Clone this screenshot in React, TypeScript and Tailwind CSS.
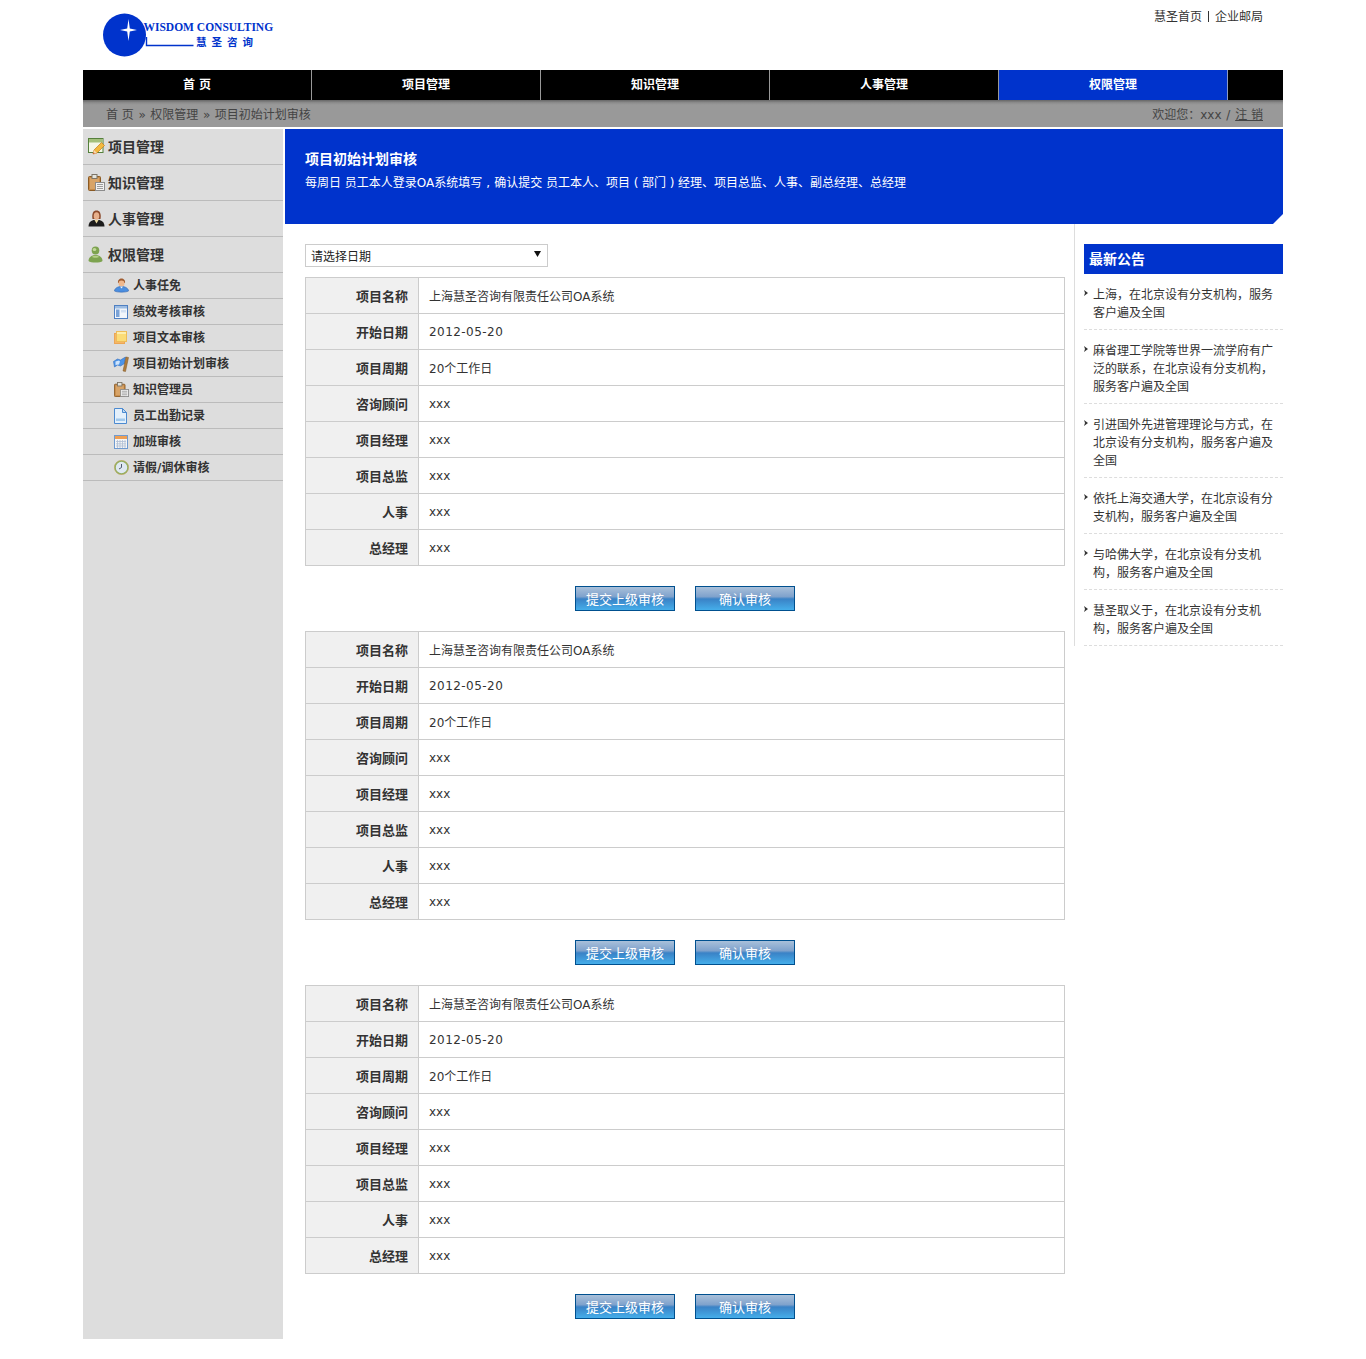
import React from "react"

const navItems = ["首 页", "项目管理", "知识管理", "人事管理", "权限管理"]

const fields = [
  ["项目名称", "上海慧圣咨询有限责任公司OA系统"],
  ["开始日期", "2012-05-20"],
  ["项目周期", "20个工作日"],
  ["咨询顾问", "xxx"],
  ["项目经理", "xxx"],
  ["项目总监", "xxx"],
  ["人事", "xxx"],
  ["总经理", "xxx"],
]

const notices = [
  "上海，在北京设有分支机构，服务客户遍及全国",
  "麻省理工学院等世界一流学府有广泛的联系，在北京设有分支机构，服务客户遍及全国",
  "引进国外先进管理理论与方式，在北京设有分支机构，服务客户遍及全国",
  "依托上海交通大学，在北京设有分支机构，服务客户遍及全国",
  "与哈佛大学，在北京设有分支机构，服务客户遍及全国",
  "慧圣取义于，在北京设有分支机构，服务客户遍及全国",
]

// Small menu icons, drawn by hand
function EditIcon() {
  return (
    <svg width="17" height="17" viewBox="0 0 17 17">
      <rect x="0.500" y="0.500" width="14.500" height="14" fill="#f4f7e8" stroke="#55803c" />
      <rect x="1" y="1" width="13.500" height="3.500" fill="#a3c07c" />
      <path d="M5 16l1-4 7.500-7.500 3 3L9 15z" fill="#f3b93e" stroke="#c07a20" strokeWidth="0.7" />
      <path d="M5 16l1-4 3 3z" fill="#f6d6b0" />
      <path d="M5 16l.500-1.800 1.300 1.300z" fill="#c84a20" />
    </svg>
  )
}

function ClipboardIcon({ size = 17 }: { size?: number }) {
  return (
    <svg width={size} height={size} viewBox="0 0 17 17">
      <rect x="0.500" y="2.500" width="12" height="14" rx="1" fill="#c68a48" stroke="#8a5a24" />
      <rect x="2" y="4" width="9" height="11" fill="#d8a468" />
      <rect x="4" y="0.500" width="5" height="4" fill="#e4e4dc" stroke="#7d7466" />
      <rect x="7.500" y="8.500" width="9" height="8" fill="#f2f2f2" stroke="#8c8c8c" />
      <path d="M9 10.500h6M9 12.500h6M9 14.500h6" stroke="#9c9c9c" />
    </svg>
  )
}

function ManagerIcon() {
  return (
    <svg width="17" height="17" viewBox="0 0 17 17">
      <path d="M4.500 9C3.500 3 5.500.500 8.500.500S13.500 3 12.500 9z" fill="#8c4a2c" />
      <ellipse cx="8.500" cy="6" rx="2.800" ry="3.800" fill="#e8b08c" />
      <path d="M.500 16.500c0-3.500 1.500-5.500 5-6.500h6c3.500 1 5 3 5 6.500z" fill="#1c1c1c" />
      <path d="M6.500 10h4l-2 3.500z" fill="#e8d8a0" />
    </svg>
  )
}

function GreenUserIcon() {
  return (
    <svg width="16" height="17" viewBox="0 0 16 17">
      <ellipse cx="7.500" cy="4.500" rx="3.800" ry="4" fill="#7da34f" />
      <path d="M.500 15c0-3.500 3-6 7-6s7 2.500 7 6c-2 2-12 2-14 0z" fill="#7da34f" />
      <path d="M4 11c1-1 2-1.200 3.500-1.200s2.500.2 3.500 1.200c-1 1-6 1-7 0z" fill="#b5d088" />
      <ellipse cx="6.500" cy="3.500" rx="1.800" ry="1.500" fill="#c2d89c" />
    </svg>
  )
}

function BlueUserIcon() {
  return (
    <svg width="15" height="15" viewBox="0 0 15 15">
      <path d="M4 5c-.5-3 1.500-4.500 3.500-4.500S11.500 2 11 5z" fill="#a05c30" />
      <ellipse cx="7.500" cy="5.500" rx="3" ry="3" fill="#eeb88e" />
      <path d="M.500 13c0-2.500 3-4.500 7-4.500s7 2 7 4.500c-2 1.500-12 1.500-14 0z" fill="#4a8ee0" stroke="#3568b0" strokeWidth="0.6" />
      <path d="M6 8.500h3l-1.500 2z" fill="#f4f4f4" />
    </svg>
  )
}

function WindowIcon() {
  return (
    <svg width="14" height="14" viewBox="0 0 14 14">
      <rect x="0.500" y="0.500" width="13" height="13" fill="#f2f6fb" stroke="#4f80c2" />
      <rect x="1" y="1" width="12" height="2.500" fill="#9cbce2" />
      <rect x="2" y="4.500" width="3.500" height="7.500" fill="#7aa2d6" />
      <rect x="7" y="5" width="5" height="2.500" fill="#d2e0f2" />
    </svg>
  )
}

function NoteIcon() {
  return (
    <svg width="13" height="13" viewBox="0 0 13 13">
      <rect x="0.500" y="2.500" width="10" height="10" fill="#f6b668" stroke="#eba654" />
      <rect x="2.500" y="0.500" width="10" height="10" fill="#fbdc78" stroke="#eebc58" />
      <rect x="3" y="1" width="9" height="2" fill="#fdeeb0" />
    </svg>
  )
}

function FlagIcon() {
  return (
    <svg width="16" height="16" viewBox="0 0 16 16" className="-ml-[1px]">
      <path d="M.500 5.500L4.500 3l3 1 5-3-1 6.500-4 2.500-3-1-3 2z" fill="#4c94e8" stroke="#2f6cc0" strokeWidth="0.6" />
      <path d="M2.500 5.500L6 4.500l1 1-1 3-3.500 .5z" fill="#cfe4fb" />
      <path d="M13 1l2.500 .5-3 14-2.500-.5z" fill="#b07c3c" stroke="#7d5624" strokeWidth="0.5" />
    </svg>
  )
}

function DocIcon() {
  return (
    <svg width="13" height="16" viewBox="0 0 13 16">
      <path d="M.500.500h8l4 4v11H.500z" fill="#e4f0fb" stroke="#4c8ad0" />
      <path d="M8.500.500v4h4z" fill="#c0daf2" stroke="#4c8ad0" />
      <rect x="2" y="10.500" width="9" height="2.500" fill="#a0c8ec" />
    </svg>
  )
}

function CalendarIcon() {
  return (
    <svg width="14" height="14" viewBox="0 0 14 14">
      <rect x="0.500" y="0.500" width="13" height="13" fill="#f6f6f6" stroke="#6f9ad0" />
      <rect x="1" y="1" width="12" height="3" fill="#ee9f54" />
      <path d="M3.500 5v8M6 5v8M8.500 5v8M11 5v8M2 6.500h10M2 8.800h10M2 11h10" stroke="#aebed4" strokeWidth="0.8" />
    </svg>
  )
}

function ClockIcon() {
  return (
    <svg width="15" height="15" viewBox="0 0 15 15">
      <circle cx="7.500" cy="7.500" r="6.500" fill="#dfe8f2" stroke="#8cb060" strokeWidth="1.600" />
      <circle cx="7.500" cy="7.500" r="7" fill="none" stroke="#d8a060" strokeWidth="0.500" />
      <path d="M7.500 4v3.500l-2.500 1.500" fill="none" stroke="#505c70" />
    </svg>
  )
}

const mainMenu = [
  { label: "项目管理", icon: <EditIcon /> },
  { label: "知识管理", icon: <ClipboardIcon /> },
  { label: "人事管理", icon: <ManagerIcon /> },
  { label: "权限管理", icon: <GreenUserIcon /> },
]

const subMenu = [
  { label: "人事任免", icon: <BlueUserIcon /> },
  { label: "绩效考核审核", icon: <WindowIcon /> },
  { label: "项目文本审核", icon: <NoteIcon /> },
  { label: "项目初始计划审核", icon: <FlagIcon /> },
  { label: "知识管理员", icon: <ClipboardIcon size={15} /> },
  { label: "员工出勤记录", icon: <DocIcon /> },
  { label: "加班审核", icon: <CalendarIcon /> },
  { label: "请假/调休审核", icon: <ClockIcon /> },
]

function Logo() {
  return (
    <svg width="180" height="50" viewBox="0 0 180 50" className="mt-[10px]">
      <circle cx="21.500" cy="25" r="21.500" fill="#0033cc" />
      <path d="M25.500 9l1.300 9.500 7.200 1.500-7.200 1.500-1.300 9.500-1.300-9.500-7.200-1.500 7.200-1.500z" fill="#fff" />
      <text x="40.500" y="20.500" fontFamily="Liberation Serif, serif" fontWeight="700" fontSize="11.500" fill="#0033cc">
        WISDOM CONSULTING
      </text>
      <path d="M43.500 27v8.500h47" fill="none" stroke="#0033cc" strokeWidth="1.400" />
      <text x="93" y="36" fontFamily="Noto Sans CJK SC, serif" fontWeight="700" fontSize="10.500" letterSpacing="5" fill="#0033cc">
        慧圣咨询
      </text>
    </svg>
  )
}

function ProjectBlock() {
  return (
    <div className="w-[760px]">
      <table className="w-full border-collapse text-[#333]">
        <tbody>
          {fields.map(([label, value]) => (
            <tr key={label}>
              <td className="h-9 w-[113px] border border-[#ccc] bg-[#f0f0f0] pr-[10px] pt-[2px] text-right text-[13px] font-bold">
                {label}
              </td>
              <td
                className={
                  value === "2012-05-20"
                    ? "border border-[#ccc] pl-[10px] tracking-[0.45px]"
                    : value === "xxx"
                      ? "border border-[#ccc] pl-[10px]"
                      : "border border-[#ccc] pl-[10px] pt-[2px]"
                }
              >
                {value}
              </td>
            </tr>
          ))}
        </tbody>
      </table>
      <div className="flex justify-center gap-5 py-5">
        <button className="h-[25px] w-[100px] border border-[#00508f] bg-[linear-gradient(#a9c0da_0%,#7fa2cc_42%,#3a82c6_52%,#45aeea_100%)] pt-[2px] text-[13px] text-white">
          提交上级审核
        </button>
        <button className="h-[25px] w-[100px] border border-[#00508f] bg-[linear-gradient(#a9c0da_0%,#7fa2cc_42%,#3a82c6_52%,#45aeea_100%)] pt-[2px] text-[13px] text-white">
          确认审核
        </button>
      </div>
    </div>
  )
}

export default function App() {
  return (
    <div className="mx-auto w-[1200px] pb-5 font-['DejaVu_Sans','Noto_Sans_CJK_SC',sans-serif] text-xs text-[#333]">
      {/* Header */}
      <div className="flex h-[70px] justify-between pl-5 pr-5">
        <Logo />
        <div className="pt-[9px] text-[#333]">
          慧圣首页<span className="mx-[6px] inline-block h-[11px] w-px bg-[#333] align-[-1px]" />企业邮局
        </div>
      </div>

      {/* Main nav */}
      <div className="flex h-[30px] bg-black">
        {navItems.map((item) => (
          <div
            key={item}
            className={
              item === "权限管理"
                ? "flex w-[229px] items-center justify-center border-r border-[#8c9cc4] bg-[#0033cc] font-bold text-white"
                : "flex w-[229px] items-center justify-center border-r border-[#999] font-bold text-white"
            }
          >
            {item}
          </div>
        ))}
      </div>

      {/* Breadcrumb */}
      <div className="flex h-[27px] items-center justify-between bg-[linear-gradient(#666_0%,#8c8c8c_10%,#999_18%)] pl-[23px] pr-5 pt-[2px] text-[#444]">
        <div>
          首 页<span className="mx-[0.75px]"> » </span>权限管理<span className="mx-[0.75px]"> » </span>项目初始计划审核
        </div>
        <div>
          欢迎您：xxx<span className="mx-[1px]"> / </span><span className="underline">注 销</span>
        </div>
      </div>

      <div className="mt-[2px] flex">
        {/* Sidebar */}
        <div className="h-[1210px] w-[200px] shrink-0 bg-[#ddd]">
          {mainMenu.map((m) => (
            <div key={m.label} className="flex h-9 items-center border-b border-[#bbb] pl-[5px] text-sm font-bold text-[#333]">
              <span className="flex w-5 shrink-0 items-center">{m.icon}</span>
              {m.label}
            </div>
          ))}
          {subMenu.map((m) => (
            <div key={m.label} className="flex h-[26px] items-center border-b border-[#bbb] pl-[31px] font-bold text-[#333]">
              <span className="flex w-[19px] shrink-0 items-center">{m.icon}</span>
              {m.label}
            </div>
          ))}
        </div>

        {/* Main */}
        <div className="ml-[2px] w-[998px]">
          <div className="relative h-[95px] bg-[#0033cc] pl-5 pt-[21px] text-white">
            <div className="text-sm leading-[18px] font-bold">项目初始计划审核</div>
            <div className="mt-[6px] leading-[18px]">
              每周日 员工本人登录OA系统填写<span className="inline-block w-3 text-center">,</span>确认提交 员工本人、项目
              <span className="inline-block w-3 text-center">(</span>部门<span className="inline-block w-3 text-center">)</span>
              经理、项目总监、人事、副总经理、总经理
            </div>
            <div className="absolute right-0 bottom-0 h-[10px] w-[10px] bg-white [clip-path:polygon(100%_0,100%_100%,0_100%)]" />
          </div>

          <div className="flex items-start">
            <div className="w-[789px] shrink-0 pl-5 pt-5">
              <div className="relative mb-[10px] h-[23px] w-[243px] border border-[#ccc] pl-[5px] leading-[24px] text-[#222]">
                请选择日期
                <svg width="7" height="6" viewBox="0 0 7 6" className="absolute right-[6px] top-[6px]">
                  <path d="M0 0h7L3.500 6z" fill="#111" />
                </svg>
              </div>
              <ProjectBlock />
              <ProjectBlock />
              <ProjectBlock />
            </div>

            {/* Notices */}
            <div className="w-[209px] border-l border-[#ddd] pl-[9px] pt-5">
              <div className="flex h-[30px] items-center bg-[#0033cc] pl-[5px] text-sm font-bold text-white">最新公告</div>
              {notices.map((n) => (
                <div key={n} className="relative border-b border-dashed border-[#ddd] pb-[7px] pl-[9px] pr-2 pt-[12px] leading-[18px]">
                  <svg width="4" height="6" viewBox="0 0 4 6" className="absolute left-0 top-[16px]">
                    <path d="M0 0l4 3-4 3 1-3z" fill="#333" />
                  </svg>
                  {n}
                </div>
              ))}
            </div>
          </div>
        </div>
      </div>
    </div>
  )
}
